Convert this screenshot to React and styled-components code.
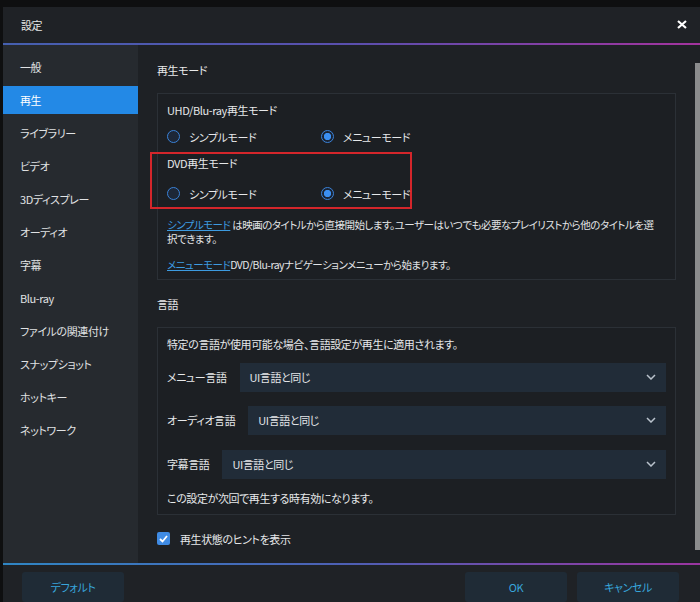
import React from "react";
import styled, { createGlobalStyle } from "styled-components";

const GlobalStyle = createGlobalStyle`
  html, body {
    margin: 0;
    padding: 0;
    background: #0e0f10;
  }
  body {
    font-family: "Noto Sans CJK JP", "Noto Sans", sans-serif;
    font-feature-settings: "palt";
    font-size: 11px;
    letter-spacing: -0.4px;
    color: #e6e8ea;
  }
`;

const Screen = styled.div`
  width: 700px;
  height: 602px;
  padding: 7px 0 0 3px;
  box-sizing: border-box;
  background: #0e0f10;
  overflow: hidden;
`;

const Dialog = styled.div`
  display: flex;
  flex-direction: column;
  height: 595px;
  background: #1e2125;
`;

const TitleBar = styled.div`
  height: 36px;
  display: flex;
  align-items: center;
  justify-content: space-between;
  padding: 0 13px 0 18px;
  background: #1f2226;
  color: #e8e8e8;
`;

const CloseButton = styled.div`
  display: flex;
  align-items: center;
  cursor: pointer;
`;

const GradientLine = styled.div`
  height: 2px;
  flex-shrink: 0;
  background: ${({ $bottom }) =>
    $bottom
      ? "linear-gradient(90deg, #2f86c4 0%, #4e5fb4 50%, #9a35a0 100%)"
      : "linear-gradient(90deg, #4560b0 0%, #5a4fae 50%, #a3339e 100%)"};
`;

const Body = styled.div`
  display: flex;
  height: 520px;
`;

const Sidebar = styled.nav`
  width: 135px;
  flex-shrink: 0;
  background: #262a2f;
  padding-top: 8px;
  display: flex;
  flex-direction: column;
  gap: 5px;
`;

const NavItem = styled.div`
  height: 28px;
  display: flex;
  align-items: center;
  padding-left: 17px;
  color: ${({ $active }) => ($active ? "#ffffff" : "#e0e2e4")};
  background: ${({ $active }) => ($active ? "#2389e6" : "transparent")};
`;

const Main = styled.main`
  flex: 1;
  padding: 17px 19px 0 19px;
  display: flex;
  flex-direction: column;
`;

const SectionTitle = styled.div`
  line-height: 16px;
  margin: ${({ $first }) => ($first ? "0" : "16px")} 0 15px;
  color: #e8e9ea;
`;

const Box = styled.div`
  border: 1px solid #2b3036;
  background: #1c1f23;
  padding: 8px 9px ${({ $pb }) => $pb}px;
`;

const GroupTitle = styled.div`
  line-height: 16px;
`;

const RadioRow = styled.div`
  display: flex;
  height: 16px;
  margin-top: ${({ $mt }) => $mt}px;
`;

const RadioOption = styled.label`
  display: flex;
  align-items: center;
  gap: 9px;
  width: 154px;
  flex-shrink: 0;
`;

const RadioCircle = styled.span`
  width: 13px;
  height: 13px;
  flex-shrink: 0;
  box-sizing: border-box;
  border-radius: 50%;
  border: 1.5px solid #3a82d8;
  background: ${({ $checked }) =>
    $checked
      ? "radial-gradient(circle, #3b8ff2 0 3.4px, #1a2332 3.9px)"
      : "#1d2737"};
`;

const Highlight = styled.div`
  border: 2px solid #d4262b;
  margin: 7px 0 0 -17px;
  padding: 1px 0 5px 15px;
  width: 262px;
  box-sizing: border-box;
`;

const Paragraph = styled.p`
  margin: ${({ $mt }) => $mt}px 0 0;
  line-height: 14px;
  font-size: 10.5px;
  letter-spacing: -0.5px;
  color: #e2e4e6;
`;

const TextLink = styled.a`
  color: #3d9be0;
  text-decoration: underline;
  cursor: pointer;
`;

const Line = styled.div`
  line-height: 16px;
  margin-top: ${({ $mt = 0 }) => $mt}px;
`;

const SelectRow = styled.div`
  display: flex;
  align-items: center;
  margin-top: ${({ $mt }) => $mt}px;
`;

const SelectLabel = styled.span`
  white-space: nowrap;
  margin-right: 13px;
`;

const SelectBox = styled.div`
  flex: 1;
  height: 29px;
  display: flex;
  align-items: center;
  justify-content: space-between;
  padding: 0 10px;
  background: #212c38;
  color: #e4e6e8;
`;

const CheckRow = styled.label`
  display: flex;
  align-items: center;
  gap: 10px;
  margin-top: 16px;
  line-height: 16px;
`;

const CheckBox = styled.span`
  width: 13px;
  height: 13px;
  border-radius: 2px;
  background: #3f8be4;
  display: flex;
  align-items: center;
  justify-content: center;
`;

const ScrollTrack = styled.div`
  width: 5px;
  flex-shrink: 0;
  padding-top: 18px;
`;

const ScrollThumb = styled.div`
  height: 487px;
  background: #8b8c8d;
`;

const Footer = styled.div`
  flex: 1;
  display: flex;
  align-items: flex-start;
  gap: 10px;
  padding: 7px 21px 0 19px;
  background: #1f2226;
`;

const Spacer = styled.div`
  flex: 1;
`;

const FooterButton = styled.button`
  width: 102px;
  height: 30px;
  border: none;
  border-radius: 3px;
  background: #1f2b36;
  color: #38a6dc;
  font-family: inherit;
  font-feature-settings: "palt";
  font-size: 11px;
  letter-spacing: -0.4px;
  cursor: pointer;
`;

const Chevron = () => (
  <svg width="10" height="6" viewBox="0 0 10 6">
    <polyline points="1,1 5,5 9,1" fill="none" stroke="#b9c2cc" strokeWidth="1.5" />
  </svg>
);

const navItems = [
  "一般",
  "再生",
  "ライブラリー",
  "ビデオ",
  "3Dディスプレー",
  "オーディオ",
  "字幕",
  "Blu-ray",
  "ファイルの関連付け",
  "スナップショット",
  "ホットキー",
  "ネットワーク",
];

const Radios = ({ mt }) => (
  <RadioRow $mt={mt}>
    <RadioOption>
      <RadioCircle />
      シンプルモード
    </RadioOption>
    <RadioOption>
      <RadioCircle $checked />
      メニューモード
    </RadioOption>
  </RadioRow>
);

const LangSelect = ({ label, mt }) => (
  <SelectRow $mt={mt}>
    <SelectLabel>{label}</SelectLabel>
    <SelectBox>
      UI言語と同じ
      <Chevron />
    </SelectBox>
  </SelectRow>
);

export default function App() {
  return (
    <>
      <GlobalStyle />
      <Screen>
        <Dialog>
          <TitleBar>
            設定
            <CloseButton>
              <svg width="10" height="9" viewBox="0 0 10 9">
                <path d="M1 1 L9 8 M9 1 L1 8" stroke="#ffffff" strokeWidth="2.2" />
              </svg>
            </CloseButton>
          </TitleBar>
          <GradientLine />
          <Body>
            <Sidebar>
              {navItems.map((item) => (
                <NavItem key={item} $active={item === "再生"}>
                  {item}
                </NavItem>
              ))}
            </Sidebar>
            <Main>
              <SectionTitle $first>再生モード</SectionTitle>
              <Box $pb={7}>
                <GroupTitle>UHD/Blu-ray再生モード</GroupTitle>
                <Radios mt={11} />
                <Highlight>
                  <GroupTitle>DVD再生モード</GroupTitle>
                  <Radios mt={15} />
                </Highlight>
                <Paragraph $mt={9}>
                  <TextLink>シンプルモード</TextLink> は映画のタイトルから直接開始します。ユーザーはいつでも必要なプレイリストから他のタイトルを選
                  <br />
                  択できます。
                </Paragraph>
                <Paragraph $mt={12}>
                  <TextLink>メニューモード</TextLink>DVD/Blu-rayナビゲーションメニューから始まります。
                </Paragraph>
              </Box>
              <SectionTitle>言語</SectionTitle>
              <Box $pb={8}>
                <Line>特定の言語が使用可能な場合、言語設定が再生に適用されます。</Line>
                <LangSelect label="メニュー言語" mt={11} />
                <LangSelect label="オーディオ言語" mt={14} />
                <LangSelect label="字幕言語" mt={15} />
                <Line $mt={11}>この設定が次回で再生する時有効になります。</Line>
              </Box>
              <CheckRow>
                <CheckBox>
                  <svg width="9" height="8" viewBox="0 0 9 8">
                    <polyline points="1,4 3.5,6.5 8,1" fill="none" stroke="#ffffff" strokeWidth="1.8" />
                  </svg>
                </CheckBox>
                再生状態のヒントを表示
              </CheckRow>
            </Main>
            <ScrollTrack>
              <ScrollThumb />
            </ScrollTrack>
          </Body>
          <GradientLine $bottom />
          <Footer>
            <FooterButton>デフォルト</FooterButton>
            <Spacer />
            <FooterButton>OK</FooterButton>
            <FooterButton>キャンセル</FooterButton>
          </Footer>
        </Dialog>
      </Screen>
    </>
  );
}
